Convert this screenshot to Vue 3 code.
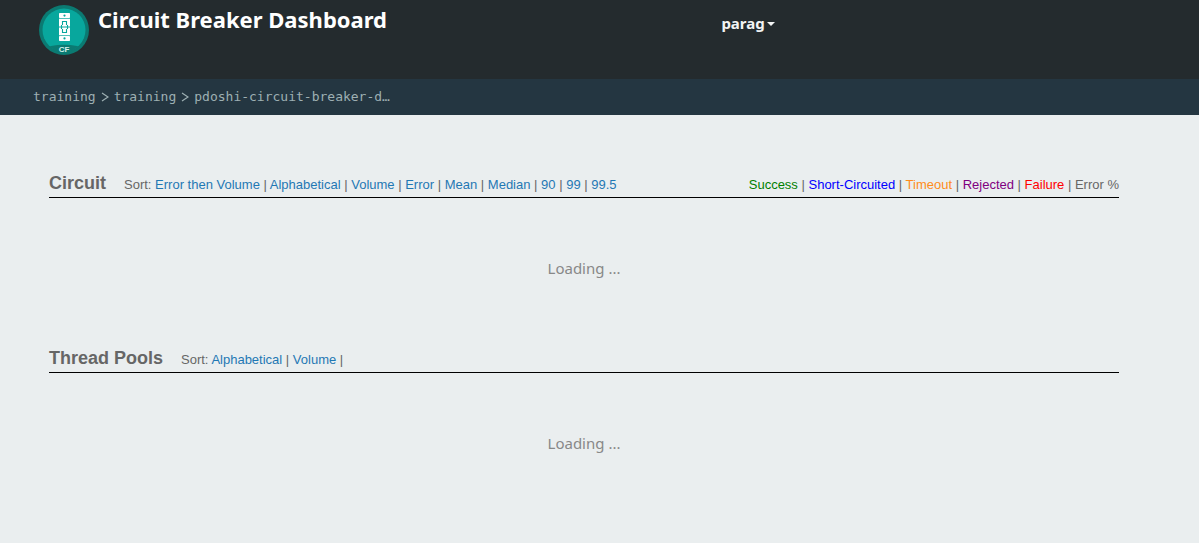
<script setup>
const crumbs = ['training', 'training', 'pdoshi-circuit-breaker-d…']
const circuitSorts = ['Error then Volume', 'Alphabetical', 'Volume', 'Error', 'Mean', 'Median', '90', '99', '99.5']
const poolSorts = ['Alphabetical', 'Volume']
const legend = [
  { label: 'Success', tone: 'success' },
  { label: 'Short-Circuited', tone: 'short' },
  { label: 'Timeout', tone: 'timeout' },
  { label: 'Rejected', tone: 'rejected' },
  { label: 'Failure', tone: 'failure' },
  { label: 'Error %', tone: 'rate' },
]
</script>

<template>
  <div class="page">
    <header class="top">
      <div class="brand">
        <svg class="logo" viewBox="0 0 50 50" aria-hidden="true">
          <defs>
            <clipPath id="disc"><circle cx="25" cy="25" r="21.8" /></clipPath>
          </defs>
          <circle cx="25" cy="25" r="25" fill="#0b7a72" />
          <circle cx="25" cy="25" r="21.5" fill="#08a79d" />
          <path d="M0 50V46L12 41Q25 38.5 38 41L50 46V50Z" fill="#0b7a72" clip-path="url(#disc)" />
          <rect x="20" y="8" width="11" height="5" rx="0.7" fill="#fff" />
          <rect x="20" y="13.7" width="11" height="16.6" fill="#fff" />
          <rect x="20" y="31" width="11" height="5" rx="0.7" fill="#fff" />
          <circle cx="25.5" cy="10.6" r="1.1" fill="#08a79d" />
          <circle cx="25.5" cy="33.4" r="1.1" fill="#08a79d" />
          <path d="M23.5 20V16.5H27.5V20M22.5 20V24M28.5 20V24M23.5 24V27.5H27.5V24M20 22H31" fill="none" stroke="#08a79d" stroke-width="1.1" />
          <text x="25" y="47" text-anchor="middle" class="logo-text">CF</text>
        </svg>
        <h1>Circuit Breaker Dashboard</h1>
      </div>
      <button class="user" type="button">parag<span class="caret"></span></button>
    </header>

    <nav class="crumbs" aria-label="Breadcrumb">
      <template v-for="(crumb, i) in crumbs" :key="i">
        <svg v-if="i" class="chevron" viewBox="0 0 8 10" aria-hidden="true"><path d="M1 1L7 5L1 9" /></svg>
        <a href="#">{{ crumb }}</a>
      </template>
    </nav>

    <main>
      <section>
        <div class="bar">
          <h2>Circuit</h2>
          <p class="sorts">
            Sort:
            <template v-for="(s, i) in circuitSorts" :key="s"><template v-if="i"> | </template><a href="#">{{ s }}</a></template>
          </p>
          <p class="legend">
            <template v-for="(l, i) in legend" :key="l.tone"><template v-if="i"> | </template><span :class="l.tone">{{ l.label }}</span></template>
          </p>
        </div>
        <p class="loading">Loading ...</p>
      </section>
      <section>
        <div class="bar">
          <h2>Thread Pools</h2>
          <p class="sorts">
            Sort:
            <template v-for="s in poolSorts" :key="s"><a href="#">{{ s }}</a> | </template>
          </p>
        </div>
        <p class="loading">Loading ...</p>
      </section>
    </main>
  </div>
</template>

<style>
body {
  margin: 0;
  background: #eaeeef;
}
</style>

<style scoped>
.page {
  min-height: 100vh;
  background: #eaeeef;
  color: #666;
  font-family: "Noto Sans", "Open Sans", sans-serif;
}
h1, h2, p {
  margin: 0;
}
a {
  text-decoration: none;
}
.top {
  display: grid;
  grid-template-columns: 60% 1fr;
  align-items: start;
  box-sizing: border-box;
  min-height: 79px;
  background: #242b2e;
  color: #fff;
}
.brand {
  display: flex;
  gap: 9px;
  padding: 5px 0 0 39px;
}
.logo {
  width: 50px;
  height: 50px;
}
.logo-text {
  fill: #d5efed;
  font: bold 8px "Liberation Sans", sans-serif;
}
h1 {
  font-size: 22px;
  line-height: 28px;
  font-weight: 700;
  white-space: nowrap;
}
.user {
  display: flex;
  align-items: center;
  justify-self: start;
  gap: 2px;
  margin: 11px 0 0 2px;
  padding: 0;
  border: 0;
  background: none;
  color: #f2f4f4;
  font: bold 15px/24px "Noto Sans", "Open Sans", sans-serif;
}
.caret {
  margin-top: 2px;
  border: 4px solid transparent;
  border-top-color: currentColor;
  border-bottom: 0;
}
.crumbs {
  display: flex;
  align-items: center;
  gap: 5px;
  box-sizing: border-box;
  min-height: 36px;
  padding: 0 33px;
  background: #243641;
  font: 13px/20px "DejaVu Sans Mono", monospace;
}
.crumbs a {
  color: #9eb0b3;
}
.chevron {
  width: 8px;
  height: 10px;
  fill: none;
  stroke: #9eb0b3;
  stroke-width: 1.2;
}
main {
  padding: 53px 80px 0 49px;
}
section {
  min-height: 175px;
}
.bar {
  display: flex;
  align-items: baseline;
  gap: 18px;
  height: 29px;
  border-bottom: 1px solid #000;
  font: 13px/31px "Liberation Sans", Arial, sans-serif;
}
h2 {
  font-size: 18px;
  line-height: 31px;
}
.sorts a {
  color: #1f78b4;
}
.legend {
  margin-left: auto;
}
.success { color: green; }
.short { color: blue; }
.timeout { color: #ff8c1a; }
.rejected { color: purple; }
.failure { color: red; }
.rate { color: #666; }
.loading {
  padding-top: 58px;
  color: #888;
  font-size: 15px;
  line-height: 24px;
  text-align: center;
}
</style>
